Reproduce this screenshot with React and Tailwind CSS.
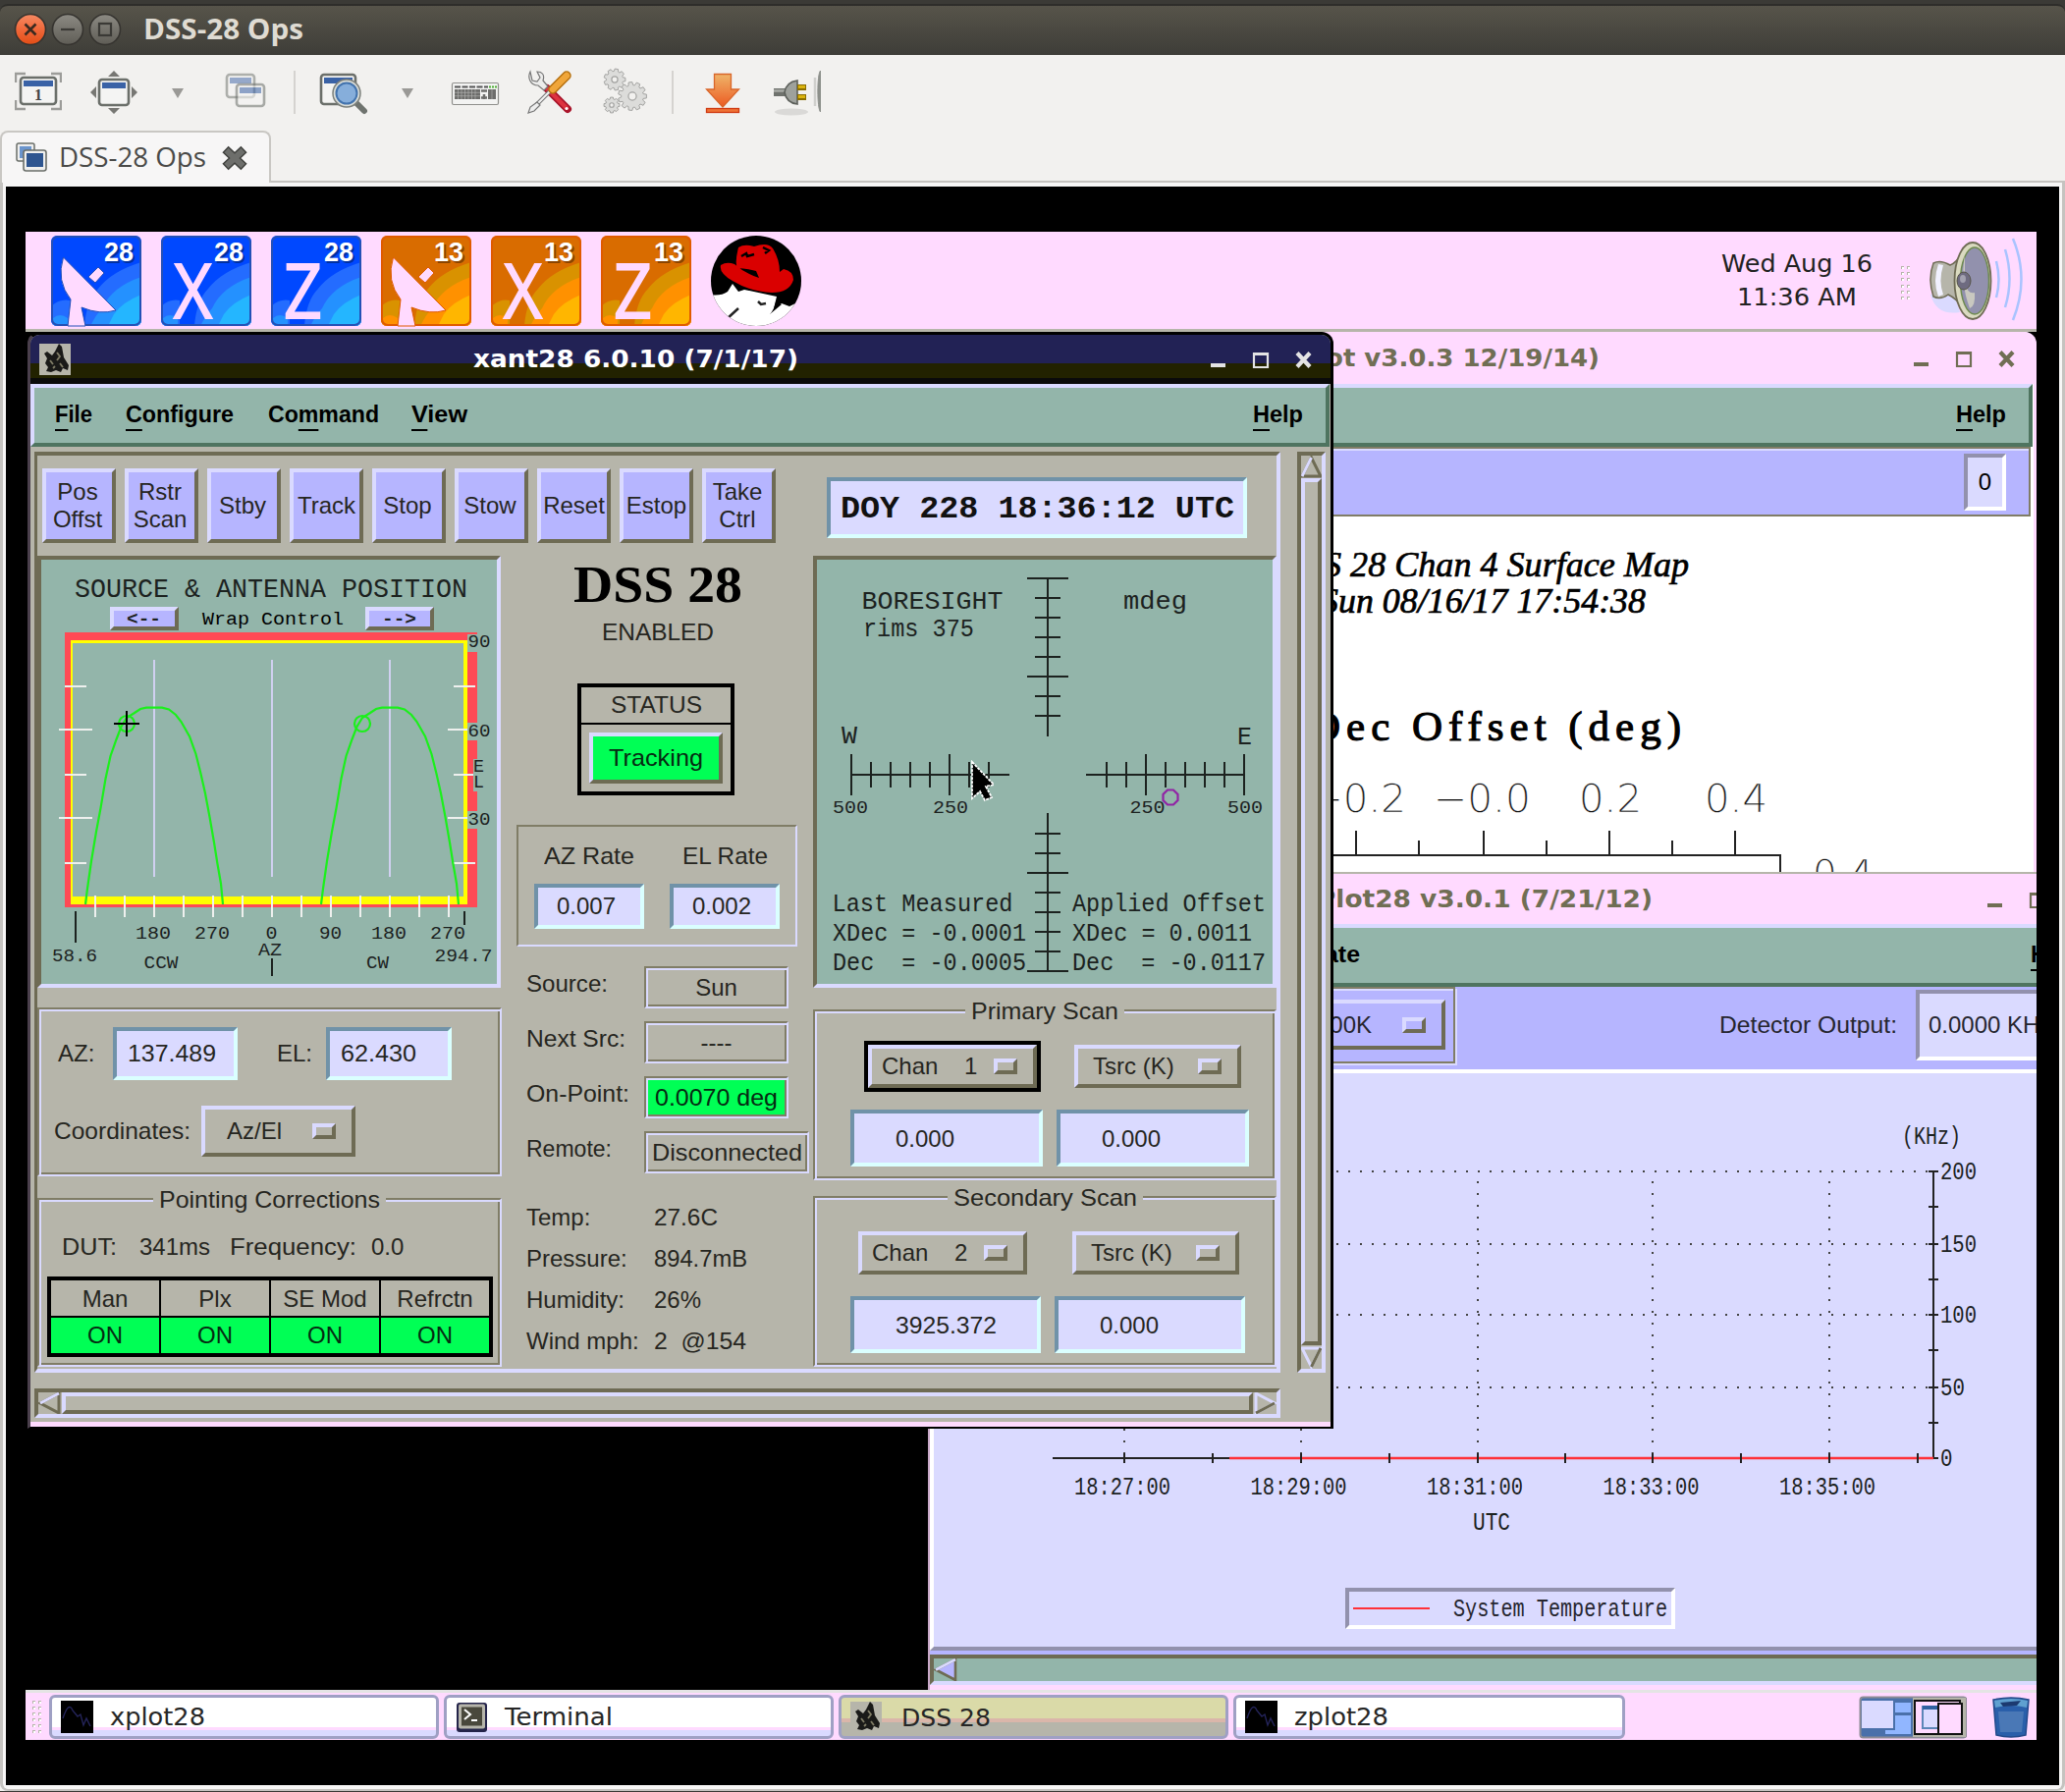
import React, { useLayoutEffect, useRef, useState } from "react";

/* Text squeezed or stretched horizontally to an exact width. */
function Fit({ w, className = "", children }) {
  const ref = useRef(null);
  const [k, setK] = useState(1);
  useLayoutEffect(() => {
    if (ref.current && ref.current.offsetWidth) setK(w / ref.current.getBoundingClientRect().width);
  }, []);
  return (
    <span className={"inline-block whitespace-pre text-left " + className} style={{ width: w }}>
      <span ref={ref} className="inline-block origin-left" style={{ transform: `scaleX(${k})` }}>
        {children}
      </span>
    </span>
  );
}

/* Chart label: x start, baseline y, total width. */
function T({ x, y, w, s, f = "Liberation Mono", b, i, c = "#1c221f", children }) {
  return (
    <text
      x={x}
      y={y}
      textLength={w}
      lengthAdjust="spacingAndGlyphs"
      fontSize={s}
      fontFamily={f + ", monospace"}
      fontWeight={b ? 700 : 400}
      fontStyle={i ? "italic" : "normal"}
      fill={c}
      xmlSpace="preserve"
      style={{ whiteSpace: "pre" }}
    >
      {children}
    </text>
  );
}

const raised = "border-4 border-t-[#dadaff] border-l-[#dadaff] border-r-[#6e6b54] border-b-[#6e6b54]";
const sunken = "border-4 border-t-[#6e6b54] border-l-[#6e6b54] border-r-[#dadaff] border-b-[#dadaff]";
const groove =
  "border-2 border-t-[#807d66] border-l-[#807d66] border-r-[#dadaff] border-b-[#dadaff] shadow-[inset_2px_2px_0_#dadaff,inset_-2px_-2px_0_#807d66]";
const field = "border-4 border-t-[#7092a8] border-l-[#7092a8] border-r-[#daffff] border-b-[#daffff] bg-[#dadaff]";

const Ic = ({ x, w, cls, children }) => (
  <svg className={"shrink-0 " + cls} width={w} height="52" viewBox={`${x} 68 ${w} 52`}>
    {children}
  </svg>
);

const gearTeeth = (cx, cy, r, n) => {
  const pts = [];
  for (let k = 0; k < n; k++) {
    const a = (k * 2 * Math.PI) / n;
    const st = Math.PI / n;
    [[-0.75, 0.78], [-0.45, 1], [0.45, 1], [0.75, 0.78]].forEach(([o, m]) =>
      pts.push(`${(cx + Math.cos(a + o * st) * r * m).toFixed(1)},${(cy + Math.sin(a + o * st) * r * m).toFixed(1)}`)
    );
  }
  return pts.join(" ");
};

function Gear({ cx, cy, r, n }) {
  return (
    <g>
      <polygon points={gearTeeth(cx, cy, r, n)} fill="#dcdcda" stroke="#a3a3a1" strokeWidth="1" />
      <circle cx={cx} cy={cy} r={r * 0.28} fill="#f2f1ef" stroke="#a3a3a1" strokeWidth="1.2" />
    </g>
  );
}

function HostTitle() {
  return (
    <div className="h-[56px] shrink-0 bg-[#3b3a36] pt-1">
      <div className="flex h-[52px] items-center rounded-t-lg border-t-2 border-[#2e2d2a] bg-linear-to-b from-[#57544a] to-[#3e3d38] pl-[14px]">
        <svg width="112" height="36" viewBox="14 12 112 36" className="shrink-0">
          <defs>
            <linearGradient id="rb" x1="0" y1="0" x2="0" y2="1">
              <stop offset="0" stopColor="#f58a63" />
              <stop offset="0.5" stopColor="#f0683a" />
              <stop offset="1" stopColor="#e24d15" />
            </linearGradient>
            <linearGradient id="gb" x1="0" y1="0" x2="0" y2="1">
              <stop offset="0" stopColor="#8c8a83" />
              <stop offset="1" stopColor="#5f5d56" />
            </linearGradient>
          </defs>
          <circle cx="31" cy="29" r="15.5" fill="url(#rb)" stroke="#35332f" strokeWidth="1.6" />
          <path d="M25.5 23.5L36.5 34.5M36.5 23.5L25.5 34.5" stroke="#3a2a20" strokeWidth="2.6" />
          <circle cx="69" cy="29" r="15.5" fill="url(#gb)" stroke="#35332f" strokeWidth="1.6" />
          <path d="M62 29H76" stroke="#3a3935" strokeWidth="2.2" />
          <circle cx="107" cy="29" r="15.5" fill="url(#gb)" stroke="#35332f" strokeWidth="1.6" />
          <rect x="101" y="23" width="12" height="12" fill="none" stroke="#3a3935" strokeWidth="2.2" />
        </svg>
        <Fit w={163} className="mb-1 ml-[20px] font-['Open_Sans','Noto_Sans',sans-serif] text-[28px] leading-[40px] font-bold text-[#dfdbd2]">
          DSS-28 Ops
        </Fit>
      </div>
    </div>
  );
}

function HostToolbar() {
  const win = (x, y, w, h, o = 1) => (
    <g opacity={o}>
      <rect x={x} y={y} width={w} height={h} rx="3" fill="#f4f4f3" stroke="#6b6f6a" strokeWidth="2.6" />
      <rect x={x + 3} y={y + 3} width={w - 6} height="6" fill="#3a62a6" />
    </g>
  );
  const down = (x) => <path d={`M${x} 90H${x + 12}L${x + 6} 100Z`} fill="#9a9996" />;
  const sep = (cls) => <div className={"h-[44px] w-[2px] shrink-0 bg-[#d5d3d0] " + cls} />;
  return (
    <div className="flex h-[76px] shrink-0 items-center pl-[15px]">
      <Ic x={15} w={48} cls="mt-0">
        <path d="M16 84V75H26M52 75H62V84M62 102V111H52M26 111H16V102" fill="none" stroke="#9c9c99" strokeWidth="2.4" />
        {win(21, 79, 36, 27)}
        <text x="39" y="102" textAnchor="middle" fontSize="16" fontWeight="700" fontFamily="Liberation Serif, serif" fill="#444">1</text>
      </Ic>
      <Ic x={92} w={49} cls="ml-[29px]">
        <path d="M116 72L122 78H110ZM116 116L122 110H110ZM92 94L98 88V100ZM140 94L134 88V100Z" fill="#777773" />
        {win(101, 81, 30, 26)}
      </Ic>
      <Ic x={174} w={14} cls="ml-[33px]">{down(175)}</Ic>
      <Ic x={229} w={43} cls="ml-[41px]">
        {win(231, 76, 28, 23, 0.5)}
        {win(241, 86, 28, 22, 0.55)}
      </Ic>
      {sep("ml-[27px]")}
      <Ic x={325} w={50} cls="ml-[24px]">
        {win(327, 76, 35, 30)}
        <path d="M361 103L371 113" stroke="#6f736e" strokeWidth="6" strokeLinecap="round" />
        <circle cx="353" cy="95" r="14" fill="#d9dcd8" stroke="#7d817c" strokeWidth="1.5" />
        <circle cx="353" cy="95" r="10.5" fill="#86aedb" stroke="#4273ae" strokeWidth="2" />
      </Ic>
      <Ic x={408} w={14} cls="ml-[33px]">{down(409)}</Ic>
      <Ic x={459} w={50} cls="ml-[37px]">
        <rect x="460.5" y="84.5" width="47" height="22" rx="1.5" fill="#f3f3f2" stroke="#8f8f8c" strokeWidth="1.2" />
        <path d="M463 88.5H497" stroke="#555" strokeWidth="2" strokeDasharray="6 1.5" />
        <path d="M498 88.5H506" stroke="#4fae35" strokeWidth="2" strokeDasharray="2 1" />
        <rect x="463" y="91" width="26" height="10" fill="#6d6d6b" />
        <path d="M490 92.5H496M493 96V101M490 99.5H496" stroke="#6d6d6b" strokeWidth="2.5" />
        <rect x="497" y="91" width="8" height="10" fill="#6d6d6b" />
        <path d="M463 94.3H489M463 97.7H489M466.5 91V101M470 91V101M473.5 91V101M477 91V101M480.5 91V101M484 91V101M501 91V101" stroke="#b9b9b7" strokeWidth="0.6" />
      </Ic>
      <Ic x={537} w={46} cls="ml-[28px]">
        <path d="M557 90L578 111" stroke="#a9142a" strokeWidth="8" strokeLinecap="round" />
        <path d="M557 90L577 110" stroke="#dd3340" strokeWidth="4.5" strokeLinecap="round" />
        <circle cx="577" cy="110.5" r="1.6" fill="#fff" />
        <path d="M540 73C537 79 540 87 548 87L554 92L558 88L553 82C555 76 552 73 547 73L550 79L547 83L542 82Z" fill="#ececeb" stroke="#777" strokeWidth="1.2" />
        <path d="M561 92L546 107" stroke="#777" strokeWidth="4" />
        <path d="M561 92L546 107" stroke="#f2f2f2" strokeWidth="2" />
        <path d="M547 104L540 109L538 115L544 113L550 107Z" fill="#eee" stroke="#777" strokeWidth="1.2" />
        <path d="M563 91L577 77" stroke="#b5700f" strokeWidth="9.5" strokeLinecap="round" />
        <path d="M563 91L577 77" stroke="#f0a63a" strokeWidth="6.5" strokeLinecap="round" />
      </Ic>
      <Ic x={614} w={46} cls="ml-[31px]">
        <Gear cx={626} cy={81} r={11} n={9} />
        <Gear cx={644} cy={98} r={14.5} n={11} />
        <Gear cx={623} cy={107} r={8} n={8} />
      </Ic>
      {sep("ml-[24px]")}
      <Ic x={718} w={36} cls="ml-[32px]">
        <defs>
          <linearGradient id="dl" x1="0" y1="0" x2="0" y2="1">
            <stop offset="0" stopColor="#efb469" />
            <stop offset="1" stopColor="#ec5a22" />
          </linearGradient>
        </defs>
        <path d="M727.5 75.5H744.5V91H752.5L736 109L719.5 91H727.5Z" fill="url(#dl)" stroke="#d9662a" strokeWidth="1.3" />
        <rect x="719.5" y="110.5" width="33" height="4" fill="#ef7236" stroke="#cf3a12" strokeWidth="1.3" />
      </Ic>
      <Ic x={787} w={49} cls="ml-[33px]">
        <ellipse cx="806" cy="114" rx="17" ry="3.5" fill="#dad9d7" />
        <path d="M788 94H803" stroke="#6f726d" strokeWidth="8" />
        <path d="M788 92.5H803" stroke="#a7aaa5" strokeWidth="2.5" />
        <path d="M812 82C804 83 800 88 799 94C800 100 804 105 812 106Z" fill="#9ea19c" stroke="#5d605b" strokeWidth="1.6" />
        <path d="M812 89H821M812 99H821" stroke="#8a6d00" strokeWidth="6" />
        <path d="M813 88.5H820M813 98.5H820" stroke="#d9b310" strokeWidth="3" />
        <path d="M830 79V108" stroke="#cfcfcc" strokeWidth="2.5" />
        <path d="M835.5 72C832 76 832 110 835.5 114Z" fill="#8d908b" stroke="#8d908b" />
      </Ic>
    </div>
  );
}

function HostTab() {
  return (
    <div className="flex h-[54px] shrink-0 items-end">
      <div className="-mb-px flex h-[54px] w-[276px] items-center rounded-t-lg border-2 border-b-0 border-[#c9c7c3] bg-[#f7f6f6] pl-[14px]">
        <svg width="33" height="34" viewBox="0 0 33 34" className="shrink-0">
          <rect x="1" y="2" width="18" height="18" rx="2" fill="#eee" stroke="#6b6f6a" strokeWidth="1.5" />
          <rect x="4" y="5" width="12" height="12" fill="#6a94cc" />
          <rect x="8" y="9" width="23" height="21" rx="2.5" fill="#efefee" stroke="#6b6f6a" strokeWidth="1.6" />
          <rect x="11" y="12" width="17" height="14" fill="#2e5590" />
        </svg>
        <Fit w={150} className="mb-[2px] ml-[11px] shrink-0 font-['Open_Sans','Noto_Sans',sans-serif] text-[27px] leading-[40px] text-[#4a4a48]">
          DSS-28 Ops
        </Fit>
        <svg width="28" height="28" viewBox="0 0 28 28" className="ml-[15px] shrink-0">
          <path d="M4.500 5L23.500 23M23.500 5L4.500 23" stroke="#3f403d" strokeWidth="9" />
          <path d="M5.500 6L22.500 22M22.500 6L5.500 22" stroke="#6d6e6b" strokeWidth="6" />
        </svg>
      </div>
      <div className="h-[2px] flex-1 bg-[#c5c3c0]" />
    </div>
  );
}

function AppTile({ kind, num, pal }) {
  return (
    <svg width="92" height="92" viewBox="0 0 92 92" className="shrink-0 overflow-visible">
      <defs>
        <clipPath id="tile">
          <rect width="92" height="92" rx="6" />
        </clipPath>
      </defs>
      <g clipPath="url(#tile)">
        <rect width="92" height="92" fill={pal[0]} />
        <path d="M92 27Q62 36 48 54Q36 66 34 92H92ZM0 72Q9 64 19 66V92H0Z" fill={pal[1]} />
        <path d="M92 42Q62 52 52 74Q46 80 40 92H92ZM2 84Q9 78 17 84V92H2Z" fill={pal[2]} />
        <path d="M92 60Q72 68 64 80L58 92H92Z" fill={pal[3]} />
      </g>
      <rect x="1" y="1" width="90" height="90" rx="6" fill="none" stroke={pal[4]} strokeWidth="2" />
      {kind === "dish" ? (
        <g fill="#ffdaff" stroke={pal[4]} strokeWidth="1">
          <path d="M12.500 22L66 76Q50 81 31 73L35 92H17L20 65Q5 46 12.500 22Z" />
          <path d="M38 42L48 32L54 38L45 48Z" />
        </g>
      ) : (
        <text x="13" y="84" textLength="39" lengthAdjust="spacingAndGlyphs" fontSize="76" fontFamily="Open Sans, sans-serif" fill="#ffdaff" stroke="#ffdaff" strokeWidth="1.800">
          {kind}
        </text>
      )}
      <text x="56" y="28" textLength="30" lengthAdjust="spacingAndGlyphs" fontSize="27" fontWeight="700" fontFamily="Liberation Sans, sans-serif" fill={pal[5]}>{num}</text>
      <text x="54" y="26" textLength="30" lengthAdjust="spacingAndGlyphs" fontSize="27" fontWeight="700" fontFamily="Liberation Sans, sans-serif" fill="#fff">{num}</text>
    </svg>
  );
}

const BLUE = ["#0048ff", "#246cff", "#2491ff", "#24b6ff", "#2450b6", "#0030a0"];
const ORANGE = ["#d96c00", "#d99200", "#ff9100", "#ffb600", "#e05a00", "#8a4400"];

function Grip({ cls, rows }) {
  return (
    <div className={"flex flex-col justify-between " + cls}>
      {Array.from({ length: rows }, (_, k) => (
        <div key={k} className="flex gap-[3px]">
          <span className="size-[3px] border-t border-l border-[#b6b5aa] bg-white" />
          <span className="size-[3px] border-t border-l border-[#b6b5aa] bg-white" />
        </div>
      ))}
    </div>
  );
}

function TopPanel() {
  return (
    <div className="flex h-[102px] border-b-3 border-[#b6b5aa] bg-[#ffdaff] pt-1 pl-[26px]">
      <div className="flex gap-5">
        <AppTile kind="dish" num="28" pal={BLUE} />
        <AppTile kind="X" num="28" pal={BLUE} />
        <AppTile kind="Z" num="28" pal={BLUE} />
        <AppTile kind="dish" num="13" pal={ORANGE} />
        <AppTile kind="X" num="13" pal={ORANGE} />
        <AppTile kind="Z" num="13" pal={ORANGE} />
        <svg width="92" height="92" viewBox="0 0 92 92">
          <defs>
            <clipPath id="rh"><circle cx="46" cy="46" r="46" /></clipPath>
          </defs>
          <g clipPath="url(#rh)">
            <rect width="92" height="92" fill="#000" />
            <path d="M-2 60Q10 62 17 57L22 49L28 57L34 55L67 62L64 74L72 69L80 72L92 66V94H-2Z" fill="#fff" />
            <path d="M27 33Q24 28 28 12Q34 8 44 11Q58 6 63 13Q70 24 70 37L74 34Q84 36 84 45Q80 58 62 58Q40 57 22 46Q8 38 10 30Q16 26 24 29Q34 38 49 43L46 36Q34 33 27 33Z" fill="#da0000" />
            <path d="M31 21L36 18L37 21L44 19M53 12L59 15L55 18" stroke="#000" strokeWidth="2.500" fill="none" />
            <path d="M48 67L51 70L56 69M5 74L16 85L28 74" stroke="#222" strokeWidth="2.500" fill="none" />
            <path d="M60 80Q64 76 66 68L72 70Z" fill="#000" />
          </g>
        </svg>
      </div>
      <div className="ml-auto flex flex-col items-center pt-[12px] font-['DejaVu_Sans',sans-serif] text-[25px] leading-[34px] text-[#222]">
        <Fit w={154}>Wed Aug 16</Fit>
        <Fit w={122}>11:36 AM</Fit>
      </div>
      <Grip cls="mt-[31px] ml-[29px] h-[34px]" rows={6} />
      <svg width="104" height="92" viewBox="1960 240 104 92" className="ml-[15px]">
        <path d="M1966 300Q1972 322 1996 318L1990 300Z" fill="#dadaff" />
        <path d="M1969 268Q1963 284 1969 302Q1976 306 1984 300Q1992 304 1998 312V258Q1992 268 1986 270Q1976 264 1969 268Z" fill="#b6b5aa" stroke="#6e6b54" strokeWidth="1.500" />
        <path d="M1974 269Q1968 286 1974 302L1979 300Q1974 286 1979 270Z" fill="#f1f1ff" />
        <ellipse cx="2009" cy="286" rx="18.500" ry="39" fill="#dadac0" stroke="#6e6b54" strokeWidth="1.800" />
        <ellipse cx="2011" cy="286" rx="14.500" ry="34" fill="#9291ad" stroke="#6e8a50" strokeWidth="1.500" />
        <path d="M2001 260Q1996 288 2006 314Q2012 312 2011 298Q2004 300 2001 288Z" fill="#c9c8c0" />
        <ellipse cx="2000" cy="286" rx="7" ry="9" fill="#6e6b80" stroke="#555348" />
        <ellipse cx="1999" cy="284" rx="3" ry="4" fill="#a3a2b0" />
        <path d="M2033 266Q2038 285 2033 303M2042 254Q2051 284 2042 313M2050 243Q2067 284 2050 326" fill="none" stroke="#a9c3ff" strokeWidth="2.500" />
      </svg>
      <div className="w-[10px]" />
    </div>
  );
}

/* A menu label with a mnemonic underline below one letter. */
function Menu({ w, pre = "", k, post, cls = "" }) {
  return (
    <Fit w={w} className={"shrink-0 font-['Liberation_Sans',Arial,sans-serif] text-[24px] leading-[28px] font-bold text-black " + cls}>
      {pre}
      <span className="underline decoration-2 underline-offset-[7px] [text-decoration-skip-ink:none]">{k}</span>
      {post}
    </Fit>
  );
}

function WinButtons({ color, cls }) {
  return (
    <svg width="108" height="24" viewBox="0 0 108 24" className={"shrink-0 " + cls}>
      <g fill="none" stroke={color}>
        <path d="M1 18H16" strokeWidth="4" />
        <path d="M45 6H59V20H45Z" strokeWidth="2.200" />
        <path d="M44 6.500H60" strokeWidth="3" />
        <path d="M89 5.500L102 19.500M102 5.500L89 19.500" strokeWidth="4.200" />
      </g>
    </svg>
  );
}

const azTicks = Array.from({ length: 13 }, (_, k) => 97 + 30 * k);
const arc =
  "M87 921L89 905L93 877L98 847L102.500 823L107.500 793L112.500 770L118.500 753L123.500 740L129 731L137 726L143 722L149 720.700H165L172 722.500L179 728L184.500 735L193 750L199.500 768L204.500 788L209 808L213.500 832L218 858L221.500 880L225 900L227 921";

function SourcePlot() {
  return (
    <div className={"h-[440px] w-[472px] bg-[#93b5aa] " + sunken}>
      <svg width="464" height="432" viewBox="42 570 464 432" className="block">
        <T x={76} y={608} w={400} s={27}>SOURCE &amp; ANTENNA POSITION</T>
        {[112, 372].map((x) => (
          <g key={x}>
            <path d={`M${x} 618H${x + 70}L${x + 66} 622H${x + 4}V638L${x} 642Z`} fill="#dadaff" />
            <path d={`M${x + 70} 618V642H${x}L${x + 4} 638H${x + 66}V622Z`} fill="#6e6b54" />
            <rect x={x + 4} y="622" width="62" height="16" fill="#b6b5ff" />
          </g>
        ))}
        <T x={129} y={636} w={35} s={19} b>&lt;--</T>
        <T x={389} y={636} w={35} s={19} b>--&gt;</T>
        <T x={206} y={636} w={144} s={19} c="#000">Wrap Control</T>
        <g shapeRendering="crispEdges">
          <path d="M66 644H486V924H66Z" fill="#ff4a55" />
          <path d="M72 652H476V921H72Z" fill="#ffff00" />
          <path d="M74 655H472V913H74Z" fill="#93b5aa" />
          <path d="M476 646H502V664H476ZM476 736H502V754H476ZM482 773H496V806H482ZM476 826H502V844H476Z" fill="#93b5aa" />
          <path d="M157 672V893M277 672V893M397 672V893" stroke="#d0d0f0" strokeWidth="2" />
          <path d="M66 699H88M60 743H94M66 789H88M60 833H94M66 879H88M462 699H484M456 743H476M462 789H482M456 833H476M462 879H484" stroke="#eef0ee" strokeWidth="2" />
          {azTicks.map((x) => (
            <path key={x} d={`M${x} 912V934`} stroke="#eef0ee" strokeWidth="2" />
          ))}
        </g>
        <g fill="none" stroke="#1bf01b" strokeWidth="2.200">
          <path d={arc} />
          <path d={arc} transform="translate(240 0)" />
          <circle cx="129" cy="737" r="8" />
          <circle cx="369" cy="737" r="8" />
        </g>
        <g stroke="#1c221f" strokeWidth="2" shapeRendering="crispEdges">
          <path d="M116 737H142M129 724V750" stroke="#000" />
          <path d="M77 928V960M473 928V942M277 976V994" />
        </g>
        <T x={476.5} y={659} w={23} s={18}>90</T>
        <T x={476.5} y={749.5} w={23} s={18}>60</T>
        <T x={476.5} y={839.5} w={23} s={18}>30</T>
        <T x={482} y={786} w={11} s={18}>E</T>
        <T x={482} y={802} w={11} s={18}>L</T>
        <T x={138} y={956} w={36} s={18}>180</T>
        <T x={198} y={956} w={36} s={18}>270</T>
        <T x={270.5} y={956} w={12} s={18}>0</T>
        <T x={325} y={956} w={23} s={18}>90</T>
        <T x={378} y={956} w={36} s={18}>180</T>
        <T x={438} y={956} w={36} s={18}>270</T>
        <T x={263} y={972.5} w={24} s={18}>AZ</T>
        <T x={53} y={978.5} w={46} s={18}>58.6</T>
        <T x={146.5} y={986} w={35} s={18}>CCW</T>
        <T x={373} y={986} w={23} s={18}>CW</T>
        <T x={442.5} y={978.5} w={59} s={18}>294.7</T>
      </svg>
    </div>
  );
}

function Boresight() {
  const v = [589, 609, 629, 649, 669, 689, 709, 729, 849, 869, 889, 909, 929, 949, 969, 989];
  const longV = [589, 689, 889, 989];
  const h = [867, 887, 907, 927, 947, 967, 987, 1007, 1127, 1147, 1167, 1187, 1207, 1227, 1247, 1267];
  const longH = [867, 967, 1167, 1267];
  return (
    <div className={"h-[440px] w-[472px] bg-[#93b5aa] " + sunken}>
      <svg width="464" height="432" viewBox="832 570 464 432" className="block">
        <g stroke="#1c221f" strokeWidth="2" shapeRendering="crispEdges">
          <path d="M1067 589V750M1067 828V989M867 789H1028M1106 789H1267" />
          {v.map((y) => (
            <path key={y} d={longV.includes(y) ? `M1046 ${y}H1088` : `M1054 ${y}H1080`} />
          ))}
          {h.map((x) => (
            <path key={x} d={longH.includes(x) ? `M${x} 768V810` : `M${x} 776V802`} />
          ))}
        </g>
        <T x={877.5} y={620} w={144} s={26}>BORESIGHT</T>
        <T x={879} y={648} w={113} s={25}>rims 375</T>
        <T x={1144} y={620} w={65} s={25}>mdeg</T>
        <T x={857} y={757} w={16} s={26}>W</T>
        <T x={1260} y={758} w={15} s={26}>E</T>
        <T x={848} y={827.5} w={36} s={18}>500</T>
        <T x={950} y={827.5} w={36} s={18}>250</T>
        <T x={1150.5} y={827.5} w={36} s={18}>250</T>
        <T x={1250} y={827.5} w={36} s={18}>500</T>
        <T x={847.5} y={928} w={184} s={26}>Last Measured</T>
        <T x={848} y={958} w={197} s={26}>XDec = -0.0001</T>
        <T x={848} y={988} w={197} s={26}>{"Dec  = -0.0005"}</T>
        <T x={1092} y={928} w={197} s={26}>Applied Offset</T>
        <T x={1092} y={958} w={183} s={26}>XDec = 0.0011</T>
        <T x={1092} y={988} w={197} s={26}>{"Dec  = -0.0117"}</T>
        <path d="M1189 804.500H1195L1199.500 809V815L1195 819.500H1189L1184.500 815V809Z" fill="none" stroke="#9122a5" strokeWidth="2.200" />
        <path d="M990 776L1012 799L1004 801L1010 812L1003 815L998 806L990 813Z" fill="#000" stroke="#fff" strokeWidth="1.800" strokeDasharray="3 1" />
      </svg>
    </div>
  );
}

const Knob = ({ cls = "" }) => <span className={"h-4 w-6 shrink-0 " + raised + " " + cls} />;

function Option({ label, cls, pl }) {
  return (
    <div className={"flex items-center whitespace-pre " + raised + " " + cls}>
      <span className={pl}>{label}</span>
      <Knob />
    </div>
  );
}

const Legend = ({ w, children }) => (
  <div className="mx-auto -mt-[14px] h-[28px] bg-[#b6b5aa] px-[6px]">
    <Fit w={w}>{children}</Fit>
  </div>
);

function ToolButtons() {
  const items = [["Pos", "Offst"], ["Rstr", "Scan"], ["Stby"], ["Track"], ["Stop"], ["Stow"], ["Reset"], ["Estop"], ["Take", "Ctrl"]];
  const wide = ["Track", "Reset", "Estop"];
  return (
    <div className="flex gap-[9px]">
      {items.map((t) => (
        <div
          key={t[0]}
          className={
            "flex h-[76px] w-[75px] flex-col items-center justify-center bg-[#b6b5ff] pb-px whitespace-nowrap " +
            (wide.includes(t[0]) ? "" : "pr-[3px] ") +
            raised
          }
        >
          {t.map((l) => (
            <span key={l}>{l}</span>
          ))}
        </div>
      ))}
    </div>
  );
}

function AntennaIcon({ w, h }) {
  return (
    <svg width={w} height={h} viewBox="0 0 32 32" preserveAspectRatio="none" className="shrink-0">
      <rect width="32" height="32" fill="#b6b5aa" />
      <path d="M20 0L23 3L25 14L30 22L29 27L24 25L22 29L17 27L12 29L7 28L9 24L6 20L8 15L5 10L8 8L13 12L16 8Z" fill="#1a1a18" />
      <path d="M18 9L21 13L18 17M11 17L14 21M21 20L24 24M14 25L16 23" stroke="#807d66" strokeWidth="1.800" fill="none" />
    </svg>
  );
}

function VScroll() {
  return (
    <div className={"ml-[17px] flex h-[938px] w-[29px] flex-col " + sunken}>
      <svg width="21" height="23" viewBox="0 0 21 23">
        <path d="M10.500 2L1 21H20Z" fill="#b6b5aa" stroke="#6e6b54" strokeWidth="3" />
        <path d="M10.500 2L1 21" stroke="#dadaff" strokeWidth="3" />
      </svg>
      <div className={"flex-1 " + raised} />
      <svg width="21" height="24" viewBox="0 0 21 24">
        <path d="M1 3H20L10.500 22Z" fill="#b6b5aa" stroke="#dadaff" strokeWidth="3" />
        <path d="M20 3L10.500 22" stroke="#6e6b54" strokeWidth="3" />
      </svg>
    </div>
  );
}

function HScroll() {
  return (
    <div className={"mt-4 ml-1 flex h-[30px] w-[1269px] " + sunken}>
      <svg width="24" height="22" viewBox="0 0 24 22">
        <path d="M2 11L21 1V21Z" fill="#b6b5aa" stroke="#6e6b54" strokeWidth="3" />
        <path d="M2 11L21 1" stroke="#dadaff" strokeWidth="3" />
      </svg>
      <div className={"flex-1 " + raised} />
      <svg width="24" height="22" viewBox="0 0 24 22">
        <path d="M3 1V21L22 11Z" fill="#b6b5aa" stroke="#dadaff" strokeWidth="3" />
        <path d="M3 21L22 11" stroke="#6e6b54" strokeWidth="3" />
      </svg>
    </div>
  );
}

function LeftColumn() {
  return (
    <div className="flex w-[473px] flex-col">
      <SourcePlot />
      <div className={"mt-5 h-[172px] " + groove}>
        <div className="mt-[18px] flex h-[54px] items-center pl-[19px]">
          <span className="w-[56px]">AZ:</span>
          <div className={"flex h-[54px] w-[127px] items-center pl-[11px] " + field}><Fit w={90}>137.489</Fit></div>
          <span className="ml-[40px] w-[50px]">EL:</span>
          <div className={"flex h-[54px] w-[128px] items-center pl-[11px] " + field}><Fit w={77}>62.430</Fit></div>
        </div>
        <div className="mt-[26px] flex h-[52px] items-center pl-[15px]">
          <span className="w-[150px]"><Fit w={139}>Coordinates:</Fit></span>
          <Option label="Az/El" cls="h-[52px] w-[157px]" pl="pl-[22px] w-[109px]" />
        </div>
      </div>
      <div className={"mt-[22px] flex h-[172px] flex-col " + groove}>
        <Legend w={225}>Pointing Corrections</Legend>
        <div className="mt-5 flex pl-[23px]">
          <span className="w-[79px]"><Fit w={56}>DUT:</Fit></span>
          <span className="w-[92px]"><Fit w={72}>341ms</Fit></span>
          <span className="w-[144px]"><Fit w={129}>Frequency:</Fit></span>
          <span>0.0</span>
        </div>
        <div className="mt-4 ml-2 grid h-[82px] w-[454px] grid-cols-4 grid-rows-2 gap-[2px] border-4 border-black bg-black">
          {["Man", "Plx", "SE Mod", "Refrctn"].map((t) => (
            <span key={t} className="bg-[#b6b5aa] pt-[5px] text-center">{t}</span>
          ))}
          {[0, 1, 2, 3].map((k) => (
            <span key={k} className="bg-[#00ff55] pt-1 text-center text-[#062a12]">ON</span>
          ))}
        </div>
      </div>
    </div>
  );
}

function MiddleColumn() {
  const rows = [
    ["Source:", "Sun", "w-[147px]", 83],
    ["Next Src:", "----", "w-[147px]", 101],
    ["On-Point:", "0.0070 deg", "w-[147px] bg-[#00ff55] text-[#062a12]", 105],
    ["Remote:", "Disconnected", "w-[168px]", 87],
  ];
  const env = [
    ["Temp:", "27.6C", 65],
    ["Pressure:", "894.7mB", 95],
    ["Humidity:", "26%", 48],
    ["Wind mph:", "2  @154", 94],
  ];
  return (
    <div className="flex w-[317px] flex-col">
      <div className="-mt-px text-center">
        <Fit w={172} className="h-[60px] font-['Liberation_Serif',serif] text-[53px] leading-[60px] font-bold text-black">DSS 28</Fit>
      </div>
      <div className="mt-[5px] h-[28px] text-center"><Fit w={114}>ENABLED</Fit></div>
      <div className="mt-[38px] ml-[77px] h-[114px] w-[160px] border-4 border-black">
        <div className="h-[38px] border-b-2 border-black pt-1 text-center"><Fit w={93}>STATUS</Fit></div>
        <div className={"mx-auto mt-2 h-[52px] w-[136px] bg-[#00ff55] pt-[8px] text-center text-[#062a12] " + raised}>
          <Fit w={96}>Tracking</Fit>
        </div>
      </div>
      <div className="mt-[30px] ml-[15px] flex h-[124px] w-[286px] gap-[26px] border-2 border-t-[#807d66] border-r-[#dadaff] border-b-[#dadaff] border-l-[#807d66] pt-4 pl-4">
        {[["AZ Rate", "0.007", 92], ["EL Rate", "0.002", 87]].map(([l, v, w]) => (
          <div key={l} className="w-[112px] text-center">
            <div className="h-[28px]"><Fit w={w}>{l}</Fit></div>
            <div className={"mt-[14px] h-[46px] pt-[5px] pr-[6px] " + field}>{v}</div>
          </div>
        ))}
      </div>
      <div className="mt-5 ml-[25px] flex flex-col gap-[13px]">
        {rows.map(([l, v, c, w]) => (
          <div key={l} className="flex h-[43px]">
            <span className="w-[120px] pt-1"><Fit w={w}>{l}</Fit></span>
            <div className={"flex items-center justify-center whitespace-nowrap " + groove + " " + c}>
              {v === "Disconnected" ? <Fit w={153}>{v}</Fit> : v === "0.0070 deg" ? <Fit w={125}>{v}</Fit> : v}
            </div>
          </div>
        ))}
      </div>
      <div className="mt-[31px] ml-[25px] flex flex-col">
        {env.map(([l, v, w]) => (
          <div key={l} className="flex h-[42px] whitespace-pre">
            <span className="w-[130px]">{l}</span>
            <Fit w={w}>{v}</Fit>
          </div>
        ))}
      </div>
    </div>
  );
}

function RightColumn() {
  const f = "flex h-[58px] items-center pt-px pl-[42px] " + field;
  return (
    <div className="flex w-[472px] flex-col">
      <Boresight />
      <div className={"mt-[22px] flex h-[174px] flex-col " + groove}>
        <Legend w={150}>Primary Scan</Legend>
        <div className="mt-4 flex items-center gap-[34px] pl-[50px]">
          <div className="border-4 border-black">
            <Option label={"Chan    1"} cls="h-[44px] w-[172px]" pl="pl-[10px] w-[124px]" />
          </div>
          <Option label="Tsrc (K)" cls="h-[44px] w-[170px]" pl="pl-[15px] w-[122px]" />
        </div>
        <div className="mt-[18px] flex gap-[14px] pl-9">
          <div className={"w-[196px] " + f}>0.000</div>
          <div className={"w-[196px] " + f}>0.000</div>
        </div>
      </div>
      <div className={"mt-4 flex h-[174px] flex-col " + groove}>
        <Legend w={187}>Secondary Scan</Legend>
        <div className="mt-5 flex items-center gap-[46px] pl-[44px]">
          <Option label={"Chan    2"} cls="h-[44px] w-[172px]" pl="pl-[10px] w-[124px]" />
          <Option label="Tsrc (K)" cls="h-[44px] w-[170px]" pl="pl-[15px] w-[122px]" />
        </div>
        <div className="mt-[22px] flex gap-[14px] pl-9">
          <div className={"w-[194px] " + f}><Fit w={103}>3925.372</Fit></div>
          <div className={"w-[194px] " + f}>0.000</div>
        </div>
      </div>
    </div>
  );
}

function XantWindow() {
  return (
    <div className="absolute top-[102px] left-[2px] h-[1117px] w-[1330px] overflow-hidden rounded-t-xl border-x-3 border-t-3 border-b-2 border-black border-l-[#4a3f4c] bg-[#b6b5aa] font-['Liberation_Sans',Arial,sans-serif] text-[24px] leading-[28px] text-[#26261f]">
      <div className="flex h-[50px] items-center bg-[linear-gradient(#222255_0_29px,#222200_29px_44px,#0a0a0a_44px)] pl-[9px]">
        <AntennaIcon w={32} h={32} />
        <Fit w={331} className="ml-[410px] font-['DejaVu_Sans',sans-serif] text-[25px] leading-[32px] font-bold text-white">xant28 6.0.10 (7/1/17)</Fit>
        <WinButtons color="#e4e4e4" cls="ml-[419px]" />
      </div>
      <div className="flex h-[64px] w-[1323px] items-start border-4 border-t-[#dadaff] border-r-[#4f7460] border-b-[#4f7460] border-l-[#dadaff] bg-[#93b5aa] pt-[13px] pl-[21px]">
        <Menu w={38} k="F" post="ile" />
        <Menu w={110} k="C" post="onfigure" cls="ml-[34px]" />
        <Menu w={113} pre="Co" k="m" post="mand" cls="ml-[35px]" />
        <Menu w={57} k="V" post="iew" cls="ml-[33px]" />
        <Menu w={51} k="H" post="elp" cls="mr-[23px] ml-auto" />
      </div>
      <div className="mt-[5px] flex pl-1">
        <div className={"flex h-[938px] w-[1269px] flex-col border-l-[3px]! " + sunken}>
          <div className="flex h-[104px] pt-[13px] pl-[5px]">
            <ToolButtons />
            <div className={"mt-[9px] ml-[52px] flex h-[62px] w-[428px] items-center pt-[3px] pl-[10px] " + field}>
              <Fit w={401} className="font-['Liberation_Mono',monospace] text-[31px] leading-[40px] font-bold text-[#111]">DOY 228 18:36:12 UTC</Fit>
            </div>
          </div>
          <div className="flex">
            <LeftColumn />
            <MiddleColumn />
            <RightColumn />
          </div>
        </div>
        <VScroll />
      </div>
      <HScroll />
      <div className="mt-1 h-[5px] bg-[#ffdaff]" />
    </div>
  );
}

function XplotWindow() {
  return (
    <div className="absolute top-[102px] left-[1290px] flex h-[560px] w-[758px] flex-col overflow-hidden rounded-tr-xl border-r-3 border-[#ffdaff] bg-white">
      <div className="flex h-[53px] shrink-0 items-center bg-[#ffdaff] pl-[34px]">
        <Fit w={279} className="font-['DejaVu_Sans',sans-serif] text-[25px] leading-[32px] font-bold text-[#706e54]">ot v3.0.3 12/19/14)</Fit>
        <WinButtons color="#706e54" cls="ml-[319px]" />
      </div>
      <div className="flex h-[64px] w-[754px] shrink-0 justify-end border-4 border-l-0 border-t-[#dadaff] border-r-[#4f7460] border-b-[#4f7460] bg-[#93b5aa] pt-[13px] pr-[23px]">
        <Menu w={51} k="H" post="elp" />
      </div>
      <div className="flex h-[71px] w-[752px] shrink-0 items-start justify-end border-2 border-[#807d66] bg-[#b6b5ff] pt-[5px] pr-[23px] shadow-[inset_0_2px_0_#dadaff]">
        <div className="h-[58px] w-[43px] border-4 border-t-[#9291ad] border-r-white border-b-white border-l-[#9291ad] bg-[#dadaff] pt-[11px] text-center font-['Liberation_Sans',Arial,sans-serif] text-[24px] leading-[28px]">0</div>
      </div>
      <svg width="755" height="364" viewBox="1316 526 755 364" className="block shrink-0">
        <g stroke="#000" strokeWidth="0.700">
          <T x={1348} y={587} w={372} s={36} f="Liberation Serif" i c="#000">S 28 Chan 4 Surface Map</T>
          <T x={1345} y={624} w={331} s={36} f="Liberation Serif" i c="#000">Sun 08/16/17 17:54:38</T>
        </g>
        <text x="1334" y="754" textLength="378" lengthAdjust="spacing" fontSize="43" fontFamily="Liberation Serif, serif" fill="#000" stroke="#000" strokeWidth="1.100">Dec Offset (deg)</text>
        <g stroke="#fff" strokeWidth="0.300">
          <T x={1334} y={827} w={98} s={39} f="DejaVu Sans Light, DejaVu Sans" c="#111">−0.2</T>
          <T x={1460} y={827} w={99} s={39} f="DejaVu Sans Light, DejaVu Sans" c="#111">−0.0</T>
          <T x={1608} y={827} w={64} s={39} f="DejaVu Sans Light, DejaVu Sans" c="#111">0.2</T>
          <T x={1736} y={827} w={64} s={39} f="DejaVu Sans Light, DejaVu Sans" c="#111">0.4</T>
          <T x={1846} y={904} w={62} s={39} f="DejaVu Sans Light, DejaVu Sans" c="#111">0.4</T>
        </g>
        <path d="M1316 871H1813V900M1381 846V871M1511 846V871M1639 846V871M1767 846V871M1445 856V871M1575 856V871M1703 856V871" fill="none" stroke="#222" strokeWidth="2" shapeRendering="crispEdges" />
      </svg>
    </div>
  );
}

function ZplotWindow() {
  const xs = [1145, 1325, 1505, 1683, 1863];
  const minor = [1235, 1415, 1594, 1773, 1953];
  const ys = [1193, 1267, 1339, 1413];
  return (
    <div className="absolute top-[652px] left-[919px] flex h-[834px] w-[1129px] flex-col overflow-hidden border-t-2 border-l-2 border-t-[#b6b5aa] border-l-[#c8a8c8] bg-[#dadaff] font-['Liberation_Sans',Arial,sans-serif] text-[24px] leading-[28px] text-[#26262f]">
      <div className="flex h-[51px] shrink-0 items-center bg-[#ffdaff] pl-[394px]">
        <Fit w={342} className="shrink-0 font-['DejaVu_Sans',sans-serif] text-[25px] leading-[32px] font-bold text-[#706e54]">Plot28 v3.0.1 (7/21/12)</Fit>
        <WinButtons color="#706e54" cls="ml-[340px]" />
      </div>
      <div className="flex h-[64px] shrink-0 border-y-4 border-t-[#dadaff] border-b-[#4f7460] bg-[#93b5aa] pt-[13px] pl-[402px]">
        <Fit w={36} className="font-bold text-black">ate</Fit>
        <Menu w={51} k="H" post="elp" cls="ml-[684px]" />
      </div>
      <div className="flex h-[84px] shrink-0 items-start bg-[#b6b5ff]">
        <div className="h-[78px] w-[535px] shrink-0 border-2 border-[#807d66] pt-[11px] shadow-[inset_2px_2px_0_#dadaff,2px_2px_0_#dadaff]">
          <div className="flex h-[51px] w-[523px] items-center border-4 border-t-[#dadaff] border-r-[#6e6b54] border-b-[#6e6b54] border-l-[#dadaff]">
            <span className="ml-auto">300K</span>
            <Knob cls="mr-4 ml-[31px]" />
          </div>
        </div>
        <span className="mt-[25px] ml-[269px] shrink-0"><Fit w={181}>Detector Output:</Fit></span>
        <div className="mt-[3px] ml-[19px] h-[72px] w-[190px] shrink-0 border-4 border-t-[#9291ad] border-r-white border-b-white border-l-[#9291ad] bg-[#dadaff] pt-[18px] pl-[9px] whitespace-nowrap">0.0000 KHz</div>
      </div>
      <div className="flex h-[592px] shrink-0 flex-col items-start border-t-4 border-b-4 border-l-4 border-t-white border-b-[#9291ad] border-l-white bg-[#dadaff]">
        <svg width="1123" height="520" viewBox="951 1093 1123 520" className="block shrink-0">
          <g stroke="#444" strokeWidth="2" strokeDasharray="2 10" shapeRendering="crispEdges">
            {ys.map((y) => (
              <path key={y} d={`M1073 ${y}H1969`} />
            ))}
            {xs.map((x) => (
              <path key={x} d={`M${x} 1203V1484`} />
            ))}
          </g>
          <g stroke="#222" strokeWidth="2" shapeRendering="crispEdges">
            <path d="M1072 1485H1252M1969 1193V1485" />
            {[1193, 1229, 1267, 1303, 1339, 1375, 1413, 1449, 1485].map((y) => (
              <path key={y} d={`M1964 ${y}H1974`} />
            ))}
          </g>
          <path d="M1252 1485H1969" stroke="#ff3038" strokeWidth="2.400" />
          <g stroke="#222" strokeWidth="2" shapeRendering="crispEdges">
            {xs.concat(minor).map((x) => (
              <path key={x} d={`M${x} 1480V1490`} />
            ))}
          </g>
          <T x={1937} y={1165} w={60} s={25}>(KHz)</T>
          <T x={1976} y={1201} w={37} s={25}>200</T>
          <T x={1976} y={1274.5} w={37} s={25}>150</T>
          <T x={1976} y={1347} w={37} s={25}>100</T>
          <T x={1976} y={1420.5} w={25} s={25}>50</T>
          <T x={1976} y={1493} w={12.5} s={25}>0</T>
          {["18:27:00", "18:29:00", "18:31:00", "18:33:00", "18:35:00"].map((t, k) => (
            <T key={t} x={1094 + k * 179.5} y={1521.5} w={98} s={25}>{t}</T>
          ))}
          <T x={1500} y={1557.5} w={38} s={25}>UTC</T>
        </svg>
        <div className="mt-[4px] ml-[419px] flex h-[42px] w-[336px] items-center border-4 border-t-[#9291ad] border-r-white border-b-white border-l-[#9291ad] pl-1">
          <div className="h-[2px] w-[78px] bg-[#ff3038]" />
          <Fit w={218} className="mt-[3px] ml-[24px] font-['Liberation_Mono',monospace] text-[25px]">System Temperature</Fit>
        </div>
      </div>
      <div className="h-1 shrink-0 bg-[#b6b5ff]" />
      <div className="flex h-[31px] shrink-0 border-t-4 border-b-4 border-l-4 border-t-[#6e6b54] border-b-[#dadaff] border-l-[#6e6b54] bg-[#93b5aa]">
        <svg width="26" height="23" viewBox="0 0 26 23">
          <path d="M2 11.500L22 1V22Z" fill="#b6b5ff" stroke="#6e6b54" strokeWidth="2.600" />
          <path d="M2 11.500L22 1" stroke="#dadaff" strokeWidth="2.600" />
        </svg>
      </div>
      <div className="flex-1 bg-[#ffdaff]" />
    </div>
  );
}

function PlotIcon() {
  return (
    <svg width="33" height="33" viewBox="0 0 33 33" className="shrink-0">
      <rect width="33" height="33" fill="#000" />
      <path d="M2 18Q8 0 12 10L17 16L20 14L23 25L26 18L30 26" fill="none" stroke="#24245a" strokeWidth="1.400" />
    </svg>
  );
}

function Task({ w, tw, label, active, icon, cls = "" }) {
  return (
    <div
      className={
        "flex h-[45px] shrink-0 items-center rounded-md border-3 border-[#9fa0c4] pl-[9px] " +
        (active ? "bg-[linear-gradient(#dadaa8_0_55%,#dab6aa_55%_65%,#b6b5aa_65%)] " : "bg-[linear-gradient(#fff_0_78%,#ffdaff_78%_84%,#dadaff_84%)] ") +
        cls
      }
      style={{ width: w }}
    >
      {icon}
      <Fit w={tw} className={"font-['DejaVu_Sans',sans-serif] text-[25px] leading-[34px] text-[#262626] " + (active ? "mt-[3px] ml-[20px]" : "ml-[17px]")}>{label}</Fit>
    </div>
  );
}

function Taskbar() {
  return (
    <div className="absolute bottom-0 left-0 flex h-[51px] w-[2048px] items-center overflow-hidden border-t-3 border-[#e4e4e4] bg-[#ffdaff] pt-px">
      <Grip cls="ml-[7px] h-[34px]" rows={6} />
      <Task w={397} tw={97} label="xplot28" icon={<PlotIcon />} cls="ml-[8px]" />
      <Task
        w={397}
        tw={110}
        label="Terminal"
        cls="ml-[5px]"
        icon={
          <svg width="33" height="32" viewBox="0 0 33 32" className="shrink-0">
            <rect x="1" y="1" width="31" height="30" rx="3" fill="#24244a" />
            <rect x="3" y="2.500" width="27" height="25" rx="2" fill="#b6b5aa" />
            <rect x="6" y="5.500" width="21" height="19" fill="#49483c" />
            <path d="M9 8L15 13L9 18M16 19H22" stroke="#fff" strokeWidth="2" fill="none" />
          </svg>
        }
      />
      <Task w={397} tw={91} label="DSS 28" active icon={<AntennaIcon w={32} h={32} />} cls="ml-[5px]" />
      <Task w={399} tw={96} label="zplot28" icon={<PlotIcon />} cls="ml-[5px]" />
      <svg width="110" height="44" viewBox="1894 1726 110 44" className="ml-[238px] shrink-0">
        <rect x="1895.500" y="1727.500" width="108" height="41" rx="3" fill="#4a70aa" stroke="#8d8c96" strokeWidth="2" />
        <path d="M1897 1731H1929V1759H1897Z" fill="#dadaff" />
        <path d="M1931 1733H1947V1743H1931ZM1931 1746H1947V1765H1921V1761H1931Z" fill="#91b6ff" />
        <path d="M1949 1728H2003V1768H1949Z" fill="#b6b5aa" />
        <rect x="1951" y="1731" width="46" height="34" fill="#ffdaff" stroke="#111" strokeWidth="2" />
        <rect x="1959" y="1737" width="22" height="22" fill="#dadaff" stroke="#5c86b8" strokeWidth="2" />
        <path d="M1959 1738H1981" stroke="#3060a0" strokeWidth="4" />
        <rect x="1975" y="1734" width="24" height="31" fill="#ffdaff" stroke="#111" strokeWidth="2" />
      </svg>
      <svg width="40" height="42" viewBox="0 0 40 42" className="ml-[25px] shrink-0">
        <path d="M2 3Q20 -1 38 3L35 39Q20 43 5 39Z" fill="#2a5faa" stroke="#244a8a" strokeWidth="1.500" />
        <path d="M3 4Q20 0 37 4L36 11Q20 7 4 11Z" fill="#5fa0d0" />
        <path d="M9 6L30 4L26 9L12 10Z" fill="#1c3a70" />
        <path d="M7 15H33L31 36H9Z" fill="#4a78b6" />
      </svg>
    </div>
  );
}

export default function App() {
  return (
    <div className="flex h-[1825px] w-[2103px] flex-col overflow-hidden bg-[#f2f1ef]">
      <HostTitle />
      <HostToolbar />
      <HostTab />
      <div className="flex h-[1638px] shrink-0 rounded-b-lg border-x-3 border-b-2 border-[#c5c3c0] bg-[#f7f6f6] px-[3px] pt-1 pb-1">
        <div className="h-[1628px] w-full bg-black pt-[46px] pl-5">
          <div className="relative h-[1536px] w-[2048px] overflow-hidden bg-black">
            <TopPanel />
            <XplotWindow />
            <ZplotWindow />
            <XantWindow />
            <Taskbar />
          </div>
        </div>
      </div>
      <div className="h-px flex-1 bg-[#3a3935]" />
    </div>
  );
}
